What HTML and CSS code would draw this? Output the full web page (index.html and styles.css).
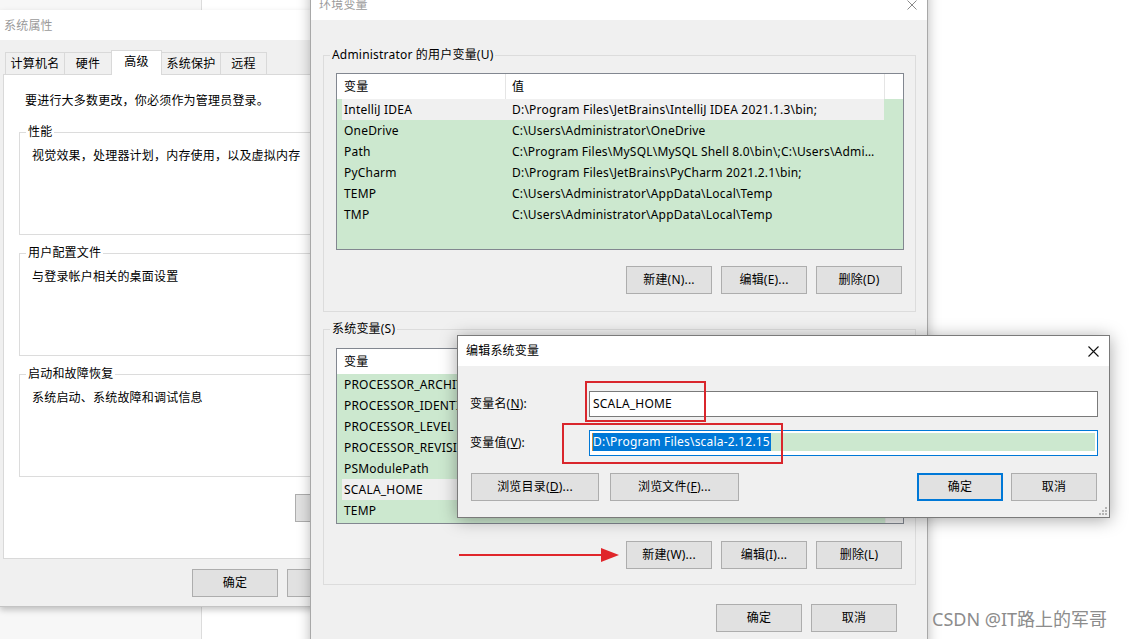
FILE: index.html
```html
<!DOCTYPE html>
<html lang="zh-CN">
<head>
<meta charset="utf-8">
<title>环境变量</title>
<link rel="stylesheet" href="styles.css">
</head>
<body>
<div class="desk-left"></div>

<section class="win sysprops">
  <div class="titlebar"><span class="title inactive">系统属性</span></div>
  <div class="tabs">
    <span class="tab t4">计算机名</span>
    <span class="tab t2">硬件</span>
    <span class="tab t2 active">高级</span>
    <span class="tab t4">系统保护</span>
    <span class="tab t2 last">远程</span>
  </div>
  <div class="tabpanel">
    <p class="note">要进行大多数更改，你必须作为管理员登录。</p>
    <fieldset class="group spgroup g1"><legend>性能</legend><p class="gtext">视觉效果，处理器计划，内存使用，以及虚拟内存</p></fieldset>
    <fieldset class="group spgroup"><legend>用户配置文件</legend><p class="gtext">与登录帐户相关的桌面设置</p></fieldset>
    <fieldset class="group spgroup"><legend>启动和故障恢复</legend><p class="gtext">系统启动、系统故障和调试信息</p></fieldset>
    <div class="envbtnrow"><button class="btn wide">环境变量(N)...</button></div>
  </div>
  <div class="btnrow sp-bottom">
    <button class="btn">确定</button>
    <button class="btn">取消</button>
    <button class="btn">应用(A)</button>
  </div>
</section>

<section class="win envwin">
  <div class="titlebar">
    <span class="title inactive">环境变量</span>
    <svg class="close" width="10" height="10" viewBox="0 0 10 10"><path d="M0.5 0.5L9.5 9.5M9.5 0.5L0.5 9.5" stroke="#8a8a8a" stroke-width="1" fill="none"/></svg>
  </div>
  <div class="envbody">
    <fieldset class="group egroup user">
      <legend>Administrator 的用户变量(U)</legend>
      <div class="list ulist">
        <div class="lmain">
          <div class="lhead"><span class="h1">变量</span><span class="h2">值</span><span class="h3"></span></div>
          <div class="rows">
            <div class="row sel"><span class="c1">IntelliJ IDEA</span><span class="c2">D:\Program Files\JetBrains\IntelliJ IDEA 2021.1.3\bin;</span></div>
            <div class="row"><span class="c1">OneDrive</span><span class="c2">C:\Users\Administrator\OneDrive</span></div>
            <div class="row"><span class="c1">Path</span><span class="c2">C:\Program Files\MySQL\MySQL Shell 8.0\bin\;C:\Users\Administrator\AppData\Local\Microsoft\WindowsApps</span></div>
            <div class="row"><span class="c1">PyCharm</span><span class="c2">D:\Program Files\JetBrains\PyCharm 2021.2.1\bin;</span></div>
            <div class="row"><span class="c1">TEMP</span><span class="c2">C:\Users\Administrator\AppData\Local\Temp</span></div>
            <div class="row"><span class="c1">TMP</span><span class="c2">C:\Users\Administrator\AppData\Local\Temp</span></div>
          </div>
        </div>
      </div>
      <div class="btnrow grpbtns">
        <button class="btn">新建(N)...</button>
        <button class="btn">编辑(E)...</button>
        <button class="btn">删除(D)</button>
      </div>
    </fieldset>

    <fieldset class="group egroup sys">
      <legend>系统变量(S)</legend>
      <div class="list slist">
        <div class="lmain">
          <div class="lhead"><span class="h1">变量</span><span class="h2">值</span></div>
          <div class="rows">
            <div class="row"><span class="c1">PROCESSOR_ARCHITECTURE</span><span class="c2">AMD64</span></div>
            <div class="row"><span class="c1">PROCESSOR_IDENTIFIER</span><span class="c2">Intel64 Family 6 Model 158 Stepping 10, GenuineIntel</span></div>
            <div class="row"><span class="c1">PROCESSOR_LEVEL</span><span class="c2">6</span></div>
            <div class="row"><span class="c1">PROCESSOR_REVISION</span><span class="c2">9e0a</span></div>
            <div class="row"><span class="c1">PSModulePath</span><span class="c2">%ProgramFiles%\WindowsPowerShell\Modules</span></div>
            <div class="row sel"><span class="c1">SCALA_HOME</span><span class="c2">D:\Program Files\scala-2.12.15</span></div>
            <div class="row"><span class="c1">TEMP</span><span class="c2">C:\Windows\TEMP</span></div>
          </div>
        </div>
        <div class="vscroll"></div>
      </div>
      <div class="btnrow grpbtns">
        <button class="btn">新建(W)...</button>
        <button class="btn">编辑(I)...</button>
        <button class="btn">删除(L)</button>
      </div>
    </fieldset>

    <div class="btnrow env-bottom">
      <button class="btn">确定</button>
      <button class="btn">取消</button>
    </div>
  </div>
</section>

<section class="win editdlg">
  <div class="titlebar">
    <span class="title">编辑系统变量</span>
    <svg class="close" width="11" height="11" viewBox="0 0 11 11"><path d="M0.5 0.5L10.5 10.5M10.5 0.5L0.5 10.5" stroke="#111" stroke-width="1.1" fill="none"/></svg>
  </div>
  <div class="editbody">
    <div class="form">
      <label class="flabel">变量名(<u>N</u>):</label>
      <div class="input">SCALA_HOME</div>
      <label class="flabel">变量值(<u>V</u>):</label>
      <div class="input focus"><div class="inner"><span class="selected">D:\Program Files\scala-2.12.15</span></div></div>
    </div>
    <div class="btnrow editbtns">
      <button class="btn browse">浏览目录(<u>D</u>)...</button>
      <button class="btn browse b2">浏览文件(<u>F</u>)...</button>
      <button class="btn default">确定</button>
      <button class="btn">取消</button>
    </div>
  </div>
  <span class="mark mark1"></span>
  <span class="mark mark2"></span>
  <svg class="grip" width="9" height="9" viewBox="0 0 9 9">
    <rect x="7" y="1" width="2" height="2" fill="#b5b5b5"/>
    <rect x="4" y="4" width="2" height="2" fill="#b5b5b5"/>
    <rect x="7" y="4" width="2" height="2" fill="#b5b5b5"/>
    <rect x="1" y="7" width="2" height="2" fill="#b5b5b5"/>
    <rect x="4" y="7" width="2" height="2" fill="#b5b5b5"/>
    <rect x="7" y="7" width="2" height="2" fill="#b5b5b5"/>
  </svg>
</section>

<svg class="arrow" width="162" height="18" viewBox="0 0 162 18">
  <line x1="0" y1="9" x2="146" y2="9" stroke="#e0262b" stroke-width="2"/>
  <polygon points="142,2 160,9 142,16" fill="#e0262b"/>
</svg>

<div class="watermark">CSDN @IT路上的军哥</div>
</body>
</html>
```

FILE: styles.css
```css
* { box-sizing: border-box; }
html, body { margin: 0; padding: 0; }
body {
  width: 1133px;
  height: 639px;
  overflow: hidden;
  position: relative;
  background: #ffffff;
  font-family: "Noto Sans", "Noto Sans CJK SC", sans-serif;
  font-size: 12px;
  line-height: 16px;
  letter-spacing: 0.2px;
  color: #000;
}
p { margin: 0; }
u { text-decoration: underline; text-underline-offset: 1px; }

.desk-left {
  position: absolute;
  left: 0; top: 0;
  width: 202px; height: 639px;
  background: #f7f7f7;
  border-right: 1px solid #dcdcdc;
}

.win {
  position: absolute;
  background: #f0f0f0;
  display: flex;
  flex-direction: column;
}
.titlebar {
  flex: none;
  display: flex;
  align-items: center;
  background: #ffffff;
}
.title.inactive { color: #9a9a9a; }
.close { margin-left: auto; flex: none; }

.btn {
  flex: none;
  width: 86px;
  height: 28px;
  border: 1px solid #adadad;
  background: #e1e1e1;
  font-family: inherit;
  font-size: 12px;
  letter-spacing: 0.2px;
  color: #000;
  padding: 0;
  line-height: 16px;
}
.btnrow { display: flex; flex: none; }

/* ---------- 系统属性 ---------- */
.sysprops {
  left: 0; top: 10px;
  width: 480px; height: 597px;
  box-shadow: 0 3px 6px rgba(0,0,0,0.22);
  border-bottom: 1px solid #c4c4c4;
}
.sysprops .titlebar { height: 30px; padding: 2px 0 0 4px; }
.tabs {
  display: flex;
  align-items: flex-start;
  margin-top: 10px;
  padding-left: 5px;
  height: 24px;
  position: relative;
  z-index: 1;
}
.tab {
  height: 22px;
  margin-top: 2px;
  border-top: 1px solid #d9d9d9;
  border-left: 1px solid #d9d9d9;
  background: #f0f0f0;
  display: flex;
  align-items: center;
  justify-content: center;
}
.tab.t4 { width: 59px; }
.tab.t2 { width: 47px; }
.tab.last { border-right: 1px solid #d9d9d9; }
.tab.active {
  width: 51px;
  height: 25px;
  margin-top: 0;
  background: #ffffff;
  border-right: 1px solid #d9d9d9;
  margin-right: -1px;
  align-items: flex-start;
  padding-top: 3px;
  position: relative;
  z-index: 2;
}
.tabpanel {
  flex: none;
  height: 485px;
  margin: 0 3px;
  background: #fff;
  border: 1px solid #d9d9d9;
  padding: 18px 15px 0 15px;
}
.note { margin-left: 6px; height: 16px; }

.group {
  margin: 0;
  border: 1px solid #dcdcdc;
  min-width: 0;
}
.group legend {
  padding: 0 2px;
  margin-left: -6px;
  line-height: 16px;
}
.spgroup {
  height: 111px;
  margin-top: 10px;
  padding: 8px 12px 0 12px;
}
.spgroup.g1 { margin-top: 15px; }
.gtext { height: 16px; }
.envbtnrow { margin-top: 17px; padding-left: 276px; }
.btn.wide { width: 110px; }
.sp-bottom {
  margin-top: 10px;
  justify-content: flex-end;
  gap: 9px;
  padding-right: 12px;
}

/* ---------- 环境变量 ---------- */
.envwin {
  left: 310px; top: -12px;
  width: 618px; height: 670px;
  border: 1px solid #a8a8a8;
  box-shadow: 0 0 12px rgba(0,0,0,0.28);
  z-index: 3;
}
.envwin .titlebar { height: 31px; padding-left: 8px; }
.envwin .close { margin-right: 10px; }
.envbody { padding: 0 11px 0 12px; }
.egroup { padding: 10px 11px 17px 12px; }
.egroup.user { margin-top: 27px; }
.egroup.sys { margin-top: 9px; padding-top: 11px; padding-bottom: 15px; }

.list {
  display: flex;
  background: #cce8cf;
  border: 1px solid #828790;
  overflow: hidden;
}
.ulist { height: 177px; }
.slist { height: 176px; }
.lmain { flex: 1; min-width: 0; display: flex; flex-direction: column; }
.lhead {
  flex: none;
  display: flex;
  align-items: center;
  height: 25px;
  background: #fff;
}
.lhead .h1 {
  width: 169px;
  height: 25px;
  padding-left: 7px;
  display: flex;
  align-items: center;
  border-right: 1px solid #e5e5e5;
}
.lhead .h2 {
  flex: 1;
  height: 25px;
  padding-left: 6px;
  display: flex;
  align-items: center;
}
.ulist .lhead .h2 { border-right: 1px solid #e5e5e5; }
.lhead .h3 { width: 18px; flex: none; }
.rows { padding-left: 5px; }
.row {
  display: flex;
  align-items: center;
  height: 21px;
  width: 542px;
  white-space: nowrap;
}
.row.sel { background: #f0f0f0; }
.row .c1 {
  flex: none;
  width: 170px;
  padding-left: 2px;
  overflow: hidden;
  text-overflow: ellipsis;
}
.row .c2 {
  flex: 1;
  min-width: 0;
  overflow: hidden;
  text-overflow: ellipsis;
  padding-right: 6px;
}
.vscroll {
  flex: none;
  width: 18px;
  background: #f0f0f0;
  border-left: 1px solid #e6e6e6;
}
.grpbtns {
  margin-top: 16px;
  justify-content: flex-end;
  gap: 9px;
  padding-right: 2px;
}
.sys .grpbtns { margin-top: 17px; }
.env-bottom {
  margin-top: 19px;
  justify-content: flex-end;
  gap: 9px;
  padding-right: 19px;
}

/* ---------- 编辑系统变量 ---------- */
.editdlg {
  left: 457px; top: 335px;
  width: 653px; height: 183px;
  border: 1px solid #7a7a7a;
  box-shadow: 0 2px 16px rgba(0,0,0,0.35);
  z-index: 5;
}
.editdlg .titlebar { height: 30px; padding-left: 8px; }
.editdlg .close { margin-right: 10px; }
.editbody { padding: 25px 11px 0 12px; }
.form {
  display: grid;
  grid-template-columns: 119px 1fr;
  row-gap: 13px;
  align-items: center;
}
.flabel { line-height: 16px; }
.input {
  height: 26px;
  border: 1px solid #7a7a7a;
  background: #fff;
  padding-left: 3px;
  display: flex;
  align-items: center;
  white-space: nowrap;
}
.input.focus {
  border-color: #0078d7;
  padding: 1px 2px;
  align-items: stretch;
}
.input .inner {
  flex: 1;
  height: 18px;
  margin-top: 1px;
  background: #cce8cf;
  display: flex;
}
.selected {
  background: #0078d7;
  color: #fff;
  line-height: 18px;
  height: 18px;
  padding-right: 1px;
  border-left: 1px solid #d08a3a;
}
.editbtns { margin-top: 17px; padding-left: 1px; }
.btn.browse { width: 128px; }
.btn.browse.b2 { width: 129px; margin-left: 11px; margin-right: auto; }
.btn.default { border: 2px solid #0078d7; }
.editbtns .btn.default + .btn { margin-left: 8px; margin-right: 1px; }

.mark {
  position: absolute;
  border: 2px solid #d9262c;
}
.mark1 { left: 127px; top: 45px; width: 121px; height: 41px; }
.mark2 { left: 104px; top: 87px; width: 221px; height: 41px; }
.grip { position: absolute; right: 2px; bottom: 2px; }

.arrow {
  position: absolute;
  left: 459px; top: 546px;
  z-index: 6;
}
.watermark {
  position: absolute;
  left: 932px; top: 607px;
  font-size: 18px;
  line-height: 24px;
  letter-spacing: 0;
  color: #8c8c8c;
  text-shadow: 0 0 2px #fff;
  white-space: nowrap;
  z-index: 7;
}
```
